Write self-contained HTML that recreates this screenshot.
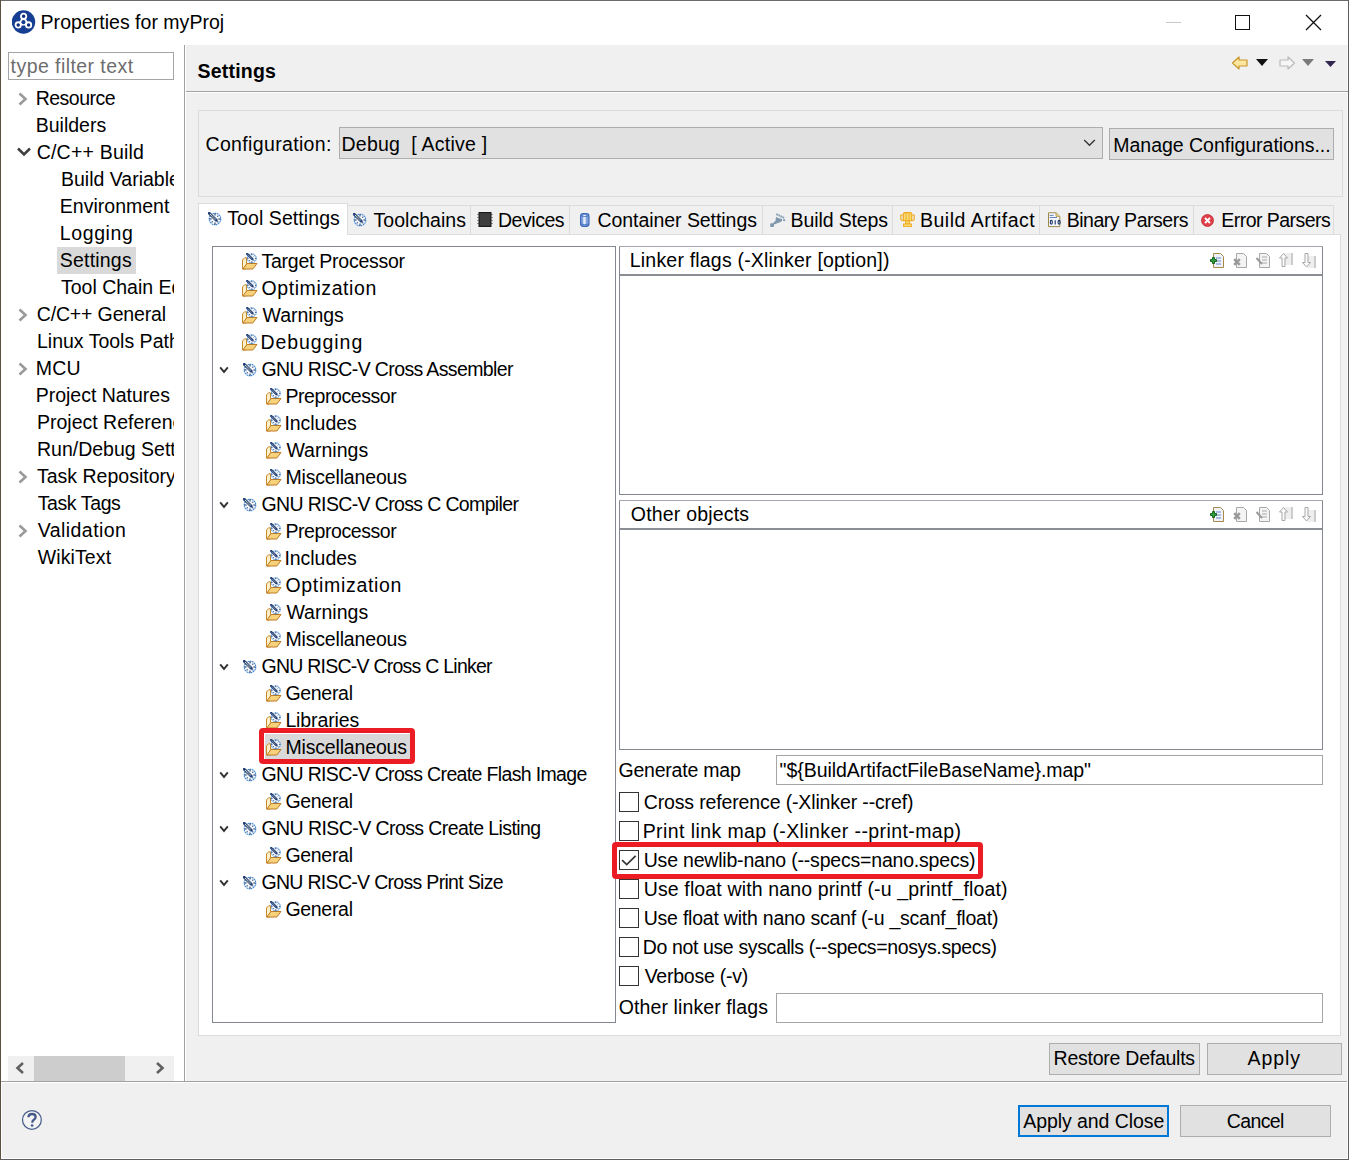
<!DOCTYPE html><html><head><meta charset="utf-8"><title>Properties for myProj</title><style>
*{box-sizing:border-box}
html,body{margin:0;padding:0}
body{width:1349px;height:1160px;position:relative;overflow:hidden;background:#f0f0f0;font-family:"Liberation Sans",sans-serif;font-size:19px;color:#000}
.a{position:absolute}
.t{position:absolute;white-space:pre;line-height:27px;height:27px}
</style></head><body>
<div class="a" style="left:1px;top:1px;width:1347px;height:44px;background:#fff"></div>
<svg class="a" style="left:12px;top:10px" width="24" height="24" viewBox="0 0 24 24"><circle cx="11.5" cy="12" r="11.7" fill="#163e93"/><polygon points="11.6,6.3 6.2,14.9 16.6,14.9" fill="#fff" stroke="#fff" stroke-width="1.4" stroke-linejoin="round"/><circle cx="11.45" cy="12.2" r="2.1" fill="#163e93"/><g fill="#0f2f7e" stroke="#fff" stroke-width="1.8"><circle cx="11.6" cy="6.3" r="2.65"/><circle cx="6.2" cy="14.9" r="2.65"/><circle cx="16.6" cy="14.9" r="2.65"/></g></svg><div id="t0" class="t" style="left:40.60px;top:9px;font-size:19.5px;letter-spacing:0.020px;">Properties for myProj</div>
<div class="a" style="left:1166px;top:22px;width:15px;height:1px;background:#c8c8c8"></div>
<div class="a" style="left:1235px;top:15px;width:15px;height:15px;border:1.5px solid #111"></div>
<svg class="a" style="left:1305px;top:14px" width="17" height="17" viewBox="0 0 17 17"><path d="M1 1 L16 16 M16 1 L1 16" stroke="#111" stroke-width="1.3"/></svg><div class="a" style="left:1px;top:45px;width:183px;height:1036px;background:#fff"></div>
<div class="a" style="left:184px;top:45px;width:1px;height:1037px;background:#a0a0a0"></div>
<div class="a" style="left:1px;top:1081px;width:1347px;height:1px;background:#a0a0a0"></div>
<div class="a" style="left:185px;top:45px;width:1px;height:1036px;background:#fff"></div>
<div class="a" style="left:1px;top:1082px;width:1347px;height:1px;background:#fff"></div>
<div class="a" style="left:1px;top:1082px;width:1px;height:77px;background:#fff"></div>
<div class="a" style="left:1px;top:1158px;width:1347px;height:1px;background:#fff"></div>
<div class="a" style="left:1347px;top:45px;width:1px;height:1114px;background:#fafafa"></div>
<div class="a" style="left:0px;top:0px;width:1349px;height:1px;background:#6a6a6a"></div>
<div class="a" style="left:0px;top:0px;width:1px;height:1160px;background:#5a5040"></div>
<div class="a" style="left:1348px;top:0px;width:1px;height:1160px;background:#5c5e62"></div>
<div class="a" style="left:0px;top:1159px;width:1349px;height:1px;background:#5c5e62"></div>
<div class="a" style="left:8px;top:52px;width:166px;height:28px;border:1px solid #a5a5a5;background:#fff"></div>
<div id="t1" class="t" style="left:10.60px;top:53px;color:#6d6d6d;font-size:19.5px;letter-spacing:0.433px;">type filter text</div>
<div class="a" style="left:0;top:0;width:174px;height:1056px;overflow:hidden">
<svg class="a" style="left:16px;top:91px" width="14" height="16" viewBox="0 0 14 16"><path d="M3.5 2.5 L9.5 8 L3.5 13.5" fill="none" stroke="#9a9a9a" stroke-width="2.6"/></svg><div id="t2" class="t" style="left:35.70px;top:85px;font-size:19.5px;letter-spacing:-0.514px;">Resource</div>
<div id="t3" class="t" style="left:35.70px;top:112px;font-size:19.5px;letter-spacing:0.014px;">Builders</div>
<svg class="a" style="left:16px;top:145px" width="16" height="14" viewBox="0 0 16 14"><path d="M2 3.5 L8 9.5 L14 3.5" fill="none" stroke="#404040" stroke-width="2.6"/></svg><div id="t4" class="t" style="left:36.70px;top:139px;font-size:19.5px;letter-spacing:0.210px;">C/C++ Build</div>
<div id="t5" class="t" style="left:61.00px;top:166px;font-size:19.5px;">Build Variables</div>
<div id="t6" class="t" style="left:59.80px;top:193px;font-size:19.5px;letter-spacing:0.010px;">Environment</div>
<div id="t7" class="t" style="left:59.80px;top:220px;font-size:19.5px;letter-spacing:0.600px;">Logging</div>
<div class="a" style="left:57px;top:247px;width:79px;height:27px;background:#d9d9d9"></div>
<div id="t8" class="t" style="left:59.80px;top:247px;font-size:19.5px;letter-spacing:0.200px;">Settings</div>
<div id="t9" class="t" style="left:61.00px;top:274px;font-size:19.5px;">Tool Chain Editor</div>
<svg class="a" style="left:16px;top:307px" width="14" height="16" viewBox="0 0 14 16"><path d="M3.5 2.5 L9.5 8 L3.5 13.5" fill="none" stroke="#9a9a9a" stroke-width="2.6"/></svg><div id="t10" class="t" style="left:36.70px;top:301px;font-size:19.5px;letter-spacing:-0.142px;">C/C++ General</div>
<div id="t11" class="t" style="left:37.00px;top:328px;font-size:19.5px;">Linux Tools Path</div>
<svg class="a" style="left:16px;top:361px" width="14" height="16" viewBox="0 0 14 16"><path d="M3.5 2.5 L9.5 8 L3.5 13.5" fill="none" stroke="#9a9a9a" stroke-width="2.6"/></svg><div id="t12" class="t" style="left:35.70px;top:355px;font-size:19.5px;letter-spacing:0.275px;">MCU</div>
<div id="t13" class="t" style="left:35.70px;top:382px;font-size:19.5px;letter-spacing:-0.014px;">Project Natures</div>
<div id="t14" class="t" style="left:37.00px;top:409px;font-size:19.5px;">Project References</div>
<div id="t15" class="t" style="left:37.00px;top:436px;font-size:19.5px;">Run/Debug Settings</div>
<svg class="a" style="left:16px;top:469px" width="14" height="16" viewBox="0 0 14 16"><path d="M3.5 2.5 L9.5 8 L3.5 13.5" fill="none" stroke="#9a9a9a" stroke-width="2.6"/></svg><div id="t16" class="t" style="left:37.00px;top:463px;font-size:19.5px;">Task Repository</div>
<div id="t17" class="t" style="left:37.70px;top:490px;font-size:19.5px;letter-spacing:-0.400px;">Task Tags</div>
<svg class="a" style="left:16px;top:523px" width="14" height="16" viewBox="0 0 14 16"><path d="M3.5 2.5 L9.5 8 L3.5 13.5" fill="none" stroke="#9a9a9a" stroke-width="2.6"/></svg><div id="t18" class="t" style="left:37.70px;top:517px;font-size:19.5px;letter-spacing:0.450px;">Validation</div>
<div id="t19" class="t" style="left:37.70px;top:544px;font-size:19.5px;letter-spacing:0.114px;">WikiText</div>
</div>
<div class="a" style="left:8px;top:1056px;width:166px;height:25px;background:#f0f0f0"></div>
<div class="a" style="left:34px;top:1056px;width:91px;height:25px;background:#cdcdcd"></div>
<svg class="a" style="left:14px;top:1061px" width="12" height="14" viewBox="0 0 12 14"><path d="M9 2 L3.5 7 L9 12" fill="none" stroke="#606060" stroke-width="2.6"/></svg><svg class="a" style="left:154px;top:1061px" width="12" height="14" viewBox="0 0 12 14"><path d="M3 2 L8.5 7 L3 12" fill="none" stroke="#606060" stroke-width="2.6"/></svg><div id="t20" class="t" style="left:197.50px;top:58px;font-weight:bold;font-size:19.5px;letter-spacing:0.214px;">Settings</div>
<div class="a" style="left:186px;top:91px;width:1162px;height:1px;background:#a0a0a0"></div>
<div class="a" style="left:185px;top:92px;width:1163px;height:1px;background:#fff"></div>
<svg class="a" style="left:1231px;top:55px" width="18" height="16" viewBox="0 0 18 16"><path d="M1.5 8 L8 2 L8 5 L16 5 L16 11 L8 11 L8 14 Z" fill="#fde6a0" stroke="#c9952a" stroke-width="1.2" stroke-linejoin="round"/></svg><svg class="a" style="left:1256px;top:59px" width="12" height="8" viewBox="0 0 12 8"><path d="M0 0 L12 0 L6 7 Z" fill="#111"/></svg><svg class="a" style="left:1278px;top:55px" width="18" height="16" viewBox="0 0 18 16"><path d="M16.5 8 L10 2 L10 5 L2 5 L2 11 L10 11 L10 14 Z" fill="#f6f6f6" stroke="#b9b9b9" stroke-width="1.2" stroke-linejoin="round"/></svg><svg class="a" style="left:1302px;top:59px" width="12" height="8" viewBox="0 0 12 8"><path d="M0 0 L12 0 L6 7 Z" fill="#7a7a7a"/></svg><svg class="a" style="left:1325px;top:61px" width="11" height="7" viewBox="0 0 11 7"><path d="M0 0 L11 0 L5.5 6 Z" fill="#35264f"/></svg><div class="a" style="left:198px;top:110px;width:1145px;height:87px;border:1px solid #dcdcdc"></div>
<div id="t21" class="t" style="left:205.50px;top:131px;font-size:19.5px;letter-spacing:0.346px;">Configuration:</div>
<div class="a" style="left:339px;top:127px;width:764px;height:32px;border:1px solid #adadad;background:#e1e1e1"></div>
<div id="t22" class="t" style="left:341.50px;top:131px;font-size:19.5px;letter-spacing:0.225px;">Debug  [ Active ]</div>
<svg class="a" style="left:1083px;top:138px" width="13" height="9" viewBox="0 0 13 9"><path d="M1.2 2 L6.5 7.3 L11.8 2" fill="none" stroke="#333" stroke-width="1.3"/></svg><div class="a" style="left:1109px;top:128px;width:225px;height:32px;border:1px solid #adadad;background:#e1e1e1"></div>
<div id="t23" class="t" style="left:1113.30px;top:132px;font-size:19.5px;letter-spacing:-0.022px;">Manage Configurations...</div>
<div class="a" style="left:347px;top:205px;width:987px;height:30px;border-top:1px solid #dcdcdc;border-right:1px solid #dcdcdc;background:#f0f0f0"></div>
<div class="a" style="left:470px;top:206px;width:1px;height:29px;background:#dcdcdc"></div>
<div class="a" style="left:569px;top:206px;width:1px;height:29px;background:#dcdcdc"></div>
<div class="a" style="left:762px;top:206px;width:1px;height:29px;background:#dcdcdc"></div>
<div class="a" style="left:892px;top:206px;width:1px;height:29px;background:#dcdcdc"></div>
<div class="a" style="left:1039px;top:206px;width:1px;height:29px;background:#dcdcdc"></div>
<div class="a" style="left:1193px;top:206px;width:1px;height:29px;background:#dcdcdc"></div>
<div class="a" style="left:198px;top:234px;width:1143px;height:802px;border:1px solid #dcdcdc;background:#fff"></div>
<div class="a" style="left:198px;top:203px;width:150px;height:32px;border:1px solid #dcdcdc;border-bottom:none;background:#fff"></div>
<svg class="a" style="left:208px;top:212px" width="14" height="14" viewBox="0 0 14 14"><circle cx="7" cy="7" r="5.8" fill="#f4f8fd" stroke="#3a86d4" stroke-width="1.1" stroke-dasharray="1.6 0.6"/><g stroke="#25406e" stroke-width="1.1"><line x1="7" y1="1.3" x2="7" y2="3.6"/><line x1="7" y1="10.4" x2="7" y2="12.7"/><line x1="1.3" y1="7" x2="3.6" y2="7"/><line x1="10.4" y1="7" x2="12.7" y2="7"/><line x1="10.3" y1="3.7" x2="9.4" y2="4.6"/><line x1="3.7" y1="10.3" x2="4.6" y2="9.4"/><line x1="10.3" y1="10.3" x2="9.4" y2="9.4"/></g><line x1="1.2" y1="1.2" x2="8.3" y2="8.3" stroke="#213f7a" stroke-width="2.8" stroke-linecap="round"/><line x1="2.2" y1="2.2" x2="7.6" y2="7.6" stroke="#f3efb8" stroke-width="1.2" stroke-dasharray="1 0.6"/></svg><div id="t24" class="t" style="left:227.30px;top:205px;font-size:19.5px;letter-spacing:0.075px;">Tool Settings</div>
<svg class="a" style="left:353px;top:213px" width="14" height="14" viewBox="0 0 14 14"><circle cx="7" cy="7" r="5.8" fill="#f4f8fd" stroke="#3a86d4" stroke-width="1.1" stroke-dasharray="1.6 0.6"/><g stroke="#25406e" stroke-width="1.1"><line x1="7" y1="1.3" x2="7" y2="3.6"/><line x1="7" y1="10.4" x2="7" y2="12.7"/><line x1="1.3" y1="7" x2="3.6" y2="7"/><line x1="10.4" y1="7" x2="12.7" y2="7"/><line x1="10.3" y1="3.7" x2="9.4" y2="4.6"/><line x1="3.7" y1="10.3" x2="4.6" y2="9.4"/><line x1="10.3" y1="10.3" x2="9.4" y2="9.4"/></g><line x1="1.2" y1="1.2" x2="8.3" y2="8.3" stroke="#213f7a" stroke-width="2.8" stroke-linecap="round"/><line x1="2.2" y1="2.2" x2="7.6" y2="7.6" stroke="#f3efb8" stroke-width="1.2" stroke-dasharray="1 0.6"/></svg><div id="t25" class="t" style="left:373.60px;top:207px;font-size:19.5px;letter-spacing:0.022px;">Toolchains</div>
<svg class="a" style="left:477px;top:212px" width="16" height="15" viewBox="0 0 16 15"><g fill="#999"><rect x="0" y="2" width="2" height="1"/><rect x="0" y="5" width="2" height="1"/><rect x="0" y="8" width="2" height="1"/><rect x="0" y="11" width="2" height="1"/><rect x="14" y="2" width="2" height="1"/><rect x="14" y="5" width="2" height="1"/><rect x="14" y="8" width="2" height="1"/><rect x="14" y="11" width="2" height="1"/></g><rect x="2" y="0.5" width="12" height="14" fill="#333" stroke="#1a1a1a"/><rect x="3" y="1.5" width="10" height="12" fill="#3e3e3e"/></svg><div id="t26" class="t" style="left:498.00px;top:207px;font-size:19.5px;letter-spacing:-0.467px;">Devices</div>
<svg class="a" style="left:580px;top:213px" width="10" height="14" viewBox="0 0 10 14"><rect x="0.6" y="0.6" width="8.4" height="12.8" rx="2.6" fill="#7fa2dc" stroke="#3a67b8" stroke-width="1.1"/><rect x="3.2" y="2" width="2.6" height="10" fill="#e3ebf9"/><path d="M1 2.8 Q4.8 4.4 8.6 2.8 M1 11 Q4.8 12.4 8.6 11" fill="none" stroke="#3a67b8" stroke-width="0.8"/></svg><div id="t27" class="t" style="left:597.50px;top:207px;font-size:19.5px;letter-spacing:-0.059px;">Container Settings</div>
<svg class="a" style="left:770px;top:213px" width="16" height="14" viewBox="0 0 16 14"><g fill="#7f98ad"><rect x="0.2" y="10.2" width="3.8" height="3.8" rx="0.8"/><path d="M2.8 10.3 L5.5 7.8 L6 4 L9 5.2 L12 6 L12 8 L10 9.3 L4 11.5 Z"/><rect x="6.2" y="0.6" width="1.8" height="1.8"/><rect x="8.3" y="1.6" width="1.8" height="1.8"/><rect x="10.4" y="2.6" width="1.8" height="1.8"/><rect x="12.4" y="3.6" width="1.8" height="1.8"/><rect x="13.2" y="6.2" width="1.9" height="1.9"/></g></svg><div id="t28" class="t" style="left:790.60px;top:207px;font-size:19.5px;letter-spacing:-0.120px;">Build Steps</div>
<svg class="a" style="left:900px;top:212px" width="15" height="15" viewBox="0 0 15 15"><path d="M0.8 3 L3.5 3 L3.5 8.5 L1.8 8.5 L0.8 7 Z M14.2 3 L11.5 3 L11.5 8.5 L13.2 8.5 L14.2 7 Z" fill="#eef2f8" stroke="#f0aa20" stroke-width="1.2"/><path d="M4.2 0.6 L10.8 0.6 L11.7 2 L11.7 8.8 L3.3 8.8 L3.3 2 Z" fill="#f8dc78" stroke="#f0aa20" stroke-width="1.1"/><g stroke="#f0aa20" stroke-width="1"><line x1="6" y1="1" x2="6" y2="8.5"/><line x1="9" y1="1" x2="9" y2="8.5"/></g><rect x="5.6" y="9" width="3.8" height="3" fill="#f8dc78" stroke="#f0aa20" stroke-width="1"/><rect x="3.6" y="12" width="7.8" height="2.6" fill="#f8dc78" stroke="#f0aa20" stroke-width="1"/></svg><div id="t29" class="t" style="left:920.00px;top:207px;font-size:19.5px;letter-spacing:0.492px;">Build Artifact</div>
<svg class="a" style="left:1047px;top:212px" width="16" height="16" viewBox="0 0 16 16"><path d="M1.5 0.8 L9.2 0.8 L12.8 4.4 L12.8 14.6 L1.5 14.6 Z" fill="#f4f7fd" stroke="#a08a4a" stroke-width="1"/><path d="M9 0.8 L9 4.4 L12.8 4.4" fill="#e6cf88" stroke="#b09540" stroke-width="0.8"/><g stroke="#6a82b6" stroke-width="1"><line x1="2.6" y1="3.4" x2="6.6" y2="3.4"/><line x1="2.6" y1="5.5" x2="10" y2="5.5"/></g><g fill="none" stroke="#17306a" stroke-width="1.1"><ellipse cx="4.3" cy="10.3" rx="1.05" ry="1.9"/><line x1="8.2" y1="8.2" x2="8.2" y2="12.4"/><ellipse cx="12.1" cy="10.3" rx="1.05" ry="1.9"/></g></svg><div id="t30" class="t" style="left:1066.70px;top:207px;font-size:19.5px;letter-spacing:-0.469px;">Binary Parsers</div>
<svg class="a" style="left:1201px;top:214px" width="13" height="13" viewBox="0 0 13 13"><circle cx="6.5" cy="6.5" r="6" fill="#e0404a" stroke="#c02a33" stroke-width="0.8"/><path d="M4 4 L9 9 M9 4 L4 9" stroke="#fff" stroke-width="1.8"/></svg><div id="t31" class="t" style="left:1221.30px;top:207px;font-size:19.5px;letter-spacing:-0.550px;">Error Parsers</div>
<div class="a" style="left:212px;top:246px;width:404px;height:777px;border:1px solid #828790;background:#fff"></div>
<svg class="a" style="left:241px;top:253px" width="17" height="17" viewBox="0 0 17 17"><path d="M1.5 16 L1.5 7 L3.5 4.8 L5.5 4.8 L5.5 10.5 L5 16 Z" fill="#fdf0c8" stroke="#c88a2e" stroke-width="1"/><path d="M1.8 16 L6 10.5 L16 10.5 L11.8 16 Z" fill="#f6d27c" stroke="#c07a20" stroke-width="1" stroke-linejoin="round"/><circle cx="10.8" cy="5.3" r="4.5" fill="#f4f8fd" stroke="#3a86d4" stroke-width="1" stroke-dasharray="1.3 0.5"/><g stroke="#25406e" stroke-width="0.9"><line x1="10.8" y1="8.4" x2="10.8" y2="9.8"/><line x1="14" y1="5.3" x2="15.3" y2="5.3"/><line x1="6.3" y1="5.3" x2="7.6" y2="5.3"/><line x1="10.8" y1="0.8" x2="10.8" y2="2.2"/><line x1="13.5" y1="2.6" x2="12.7" y2="3.4"/><line x1="13.5" y1="8" x2="12.7" y2="7.2"/><line x1="8.1" y1="8" x2="8.9" y2="7.2"/></g><line x1="6.2" y1="1" x2="11.4" y2="6.2" stroke="#213f7a" stroke-width="2.4" stroke-linecap="round"/><line x1="7" y1="1.8" x2="10.8" y2="5.6" stroke="#f3efb8" stroke-width="0.8" stroke-dasharray="0.8 0.6"/></svg><div id="t32" class="t" style="left:261.50px;top:248px;font-size:19.5px;letter-spacing:-0.253px;">Target Processor</div>
<svg class="a" style="left:241px;top:280px" width="17" height="17" viewBox="0 0 17 17"><path d="M1.5 16 L1.5 7 L3.5 4.8 L5.5 4.8 L5.5 10.5 L5 16 Z" fill="#fdf0c8" stroke="#c88a2e" stroke-width="1"/><path d="M1.8 16 L6 10.5 L16 10.5 L11.8 16 Z" fill="#f6d27c" stroke="#c07a20" stroke-width="1" stroke-linejoin="round"/><circle cx="10.8" cy="5.3" r="4.5" fill="#f4f8fd" stroke="#3a86d4" stroke-width="1" stroke-dasharray="1.3 0.5"/><g stroke="#25406e" stroke-width="0.9"><line x1="10.8" y1="8.4" x2="10.8" y2="9.8"/><line x1="14" y1="5.3" x2="15.3" y2="5.3"/><line x1="6.3" y1="5.3" x2="7.6" y2="5.3"/><line x1="10.8" y1="0.8" x2="10.8" y2="2.2"/><line x1="13.5" y1="2.6" x2="12.7" y2="3.4"/><line x1="13.5" y1="8" x2="12.7" y2="7.2"/><line x1="8.1" y1="8" x2="8.9" y2="7.2"/></g><line x1="6.2" y1="1" x2="11.4" y2="6.2" stroke="#213f7a" stroke-width="2.4" stroke-linecap="round"/><line x1="7" y1="1.8" x2="10.8" y2="5.6" stroke="#f3efb8" stroke-width="0.8" stroke-dasharray="0.8 0.6"/></svg><div id="t33" class="t" style="left:261.50px;top:275px;font-size:19.5px;letter-spacing:0.582px;">Optimization</div>
<svg class="a" style="left:241px;top:307px" width="17" height="17" viewBox="0 0 17 17"><path d="M1.5 16 L1.5 7 L3.5 4.8 L5.5 4.8 L5.5 10.5 L5 16 Z" fill="#fdf0c8" stroke="#c88a2e" stroke-width="1"/><path d="M1.8 16 L6 10.5 L16 10.5 L11.8 16 Z" fill="#f6d27c" stroke="#c07a20" stroke-width="1" stroke-linejoin="round"/><circle cx="10.8" cy="5.3" r="4.5" fill="#f4f8fd" stroke="#3a86d4" stroke-width="1" stroke-dasharray="1.3 0.5"/><g stroke="#25406e" stroke-width="0.9"><line x1="10.8" y1="8.4" x2="10.8" y2="9.8"/><line x1="14" y1="5.3" x2="15.3" y2="5.3"/><line x1="6.3" y1="5.3" x2="7.6" y2="5.3"/><line x1="10.8" y1="0.8" x2="10.8" y2="2.2"/><line x1="13.5" y1="2.6" x2="12.7" y2="3.4"/><line x1="13.5" y1="8" x2="12.7" y2="7.2"/><line x1="8.1" y1="8" x2="8.9" y2="7.2"/></g><line x1="6.2" y1="1" x2="11.4" y2="6.2" stroke="#213f7a" stroke-width="2.4" stroke-linecap="round"/><line x1="7" y1="1.8" x2="10.8" y2="5.6" stroke="#f3efb8" stroke-width="0.8" stroke-dasharray="0.8 0.6"/></svg><div id="t34" class="t" style="left:262.50px;top:302px;font-size:19.5px;letter-spacing:-0.043px;">Warnings</div>
<svg class="a" style="left:241px;top:334px" width="17" height="17" viewBox="0 0 17 17"><path d="M1.5 16 L1.5 7 L3.5 4.8 L5.5 4.8 L5.5 10.5 L5 16 Z" fill="#fdf0c8" stroke="#c88a2e" stroke-width="1"/><path d="M1.8 16 L6 10.5 L16 10.5 L11.8 16 Z" fill="#f6d27c" stroke="#c07a20" stroke-width="1" stroke-linejoin="round"/><circle cx="10.8" cy="5.3" r="4.5" fill="#f4f8fd" stroke="#3a86d4" stroke-width="1" stroke-dasharray="1.3 0.5"/><g stroke="#25406e" stroke-width="0.9"><line x1="10.8" y1="8.4" x2="10.8" y2="9.8"/><line x1="14" y1="5.3" x2="15.3" y2="5.3"/><line x1="6.3" y1="5.3" x2="7.6" y2="5.3"/><line x1="10.8" y1="0.8" x2="10.8" y2="2.2"/><line x1="13.5" y1="2.6" x2="12.7" y2="3.4"/><line x1="13.5" y1="8" x2="12.7" y2="7.2"/><line x1="8.1" y1="8" x2="8.9" y2="7.2"/></g><line x1="6.2" y1="1" x2="11.4" y2="6.2" stroke="#213f7a" stroke-width="2.4" stroke-linecap="round"/><line x1="7" y1="1.8" x2="10.8" y2="5.6" stroke="#f3efb8" stroke-width="0.8" stroke-dasharray="0.8 0.6"/></svg><div id="t35" class="t" style="left:260.50px;top:329px;font-size:19.5px;letter-spacing:0.925px;">Debugging</div>
<svg class="a" style="left:219px;top:366px" width="11" height="8" viewBox="0 0 11 8"><path d="M1.2 1.3 L5 5.9 L8.8 1.3" fill="none" stroke="#333" stroke-width="1.9"/></svg><svg class="a" style="left:243px;top:363px" width="14" height="14" viewBox="0 0 14 14"><circle cx="7" cy="7" r="5.8" fill="#f4f8fd" stroke="#3a86d4" stroke-width="1.1" stroke-dasharray="1.6 0.6"/><g stroke="#25406e" stroke-width="1.1"><line x1="7" y1="1.3" x2="7" y2="3.6"/><line x1="7" y1="10.4" x2="7" y2="12.7"/><line x1="1.3" y1="7" x2="3.6" y2="7"/><line x1="10.4" y1="7" x2="12.7" y2="7"/><line x1="10.3" y1="3.7" x2="9.4" y2="4.6"/><line x1="3.7" y1="10.3" x2="4.6" y2="9.4"/><line x1="10.3" y1="10.3" x2="9.4" y2="9.4"/></g><line x1="1.2" y1="1.2" x2="8.3" y2="8.3" stroke="#213f7a" stroke-width="2.8" stroke-linecap="round"/><line x1="2.2" y1="2.2" x2="7.6" y2="7.6" stroke="#f3efb8" stroke-width="1.2" stroke-dasharray="1 0.6"/></svg><div id="t36" class="t" style="left:261.50px;top:356px;font-size:19.5px;letter-spacing:-0.628px;">GNU RISC-V Cross Assembler</div>
<svg class="a" style="left:265px;top:388px" width="17" height="17" viewBox="0 0 17 17"><path d="M1.5 16 L1.5 7 L3.5 4.8 L5.5 4.8 L5.5 10.5 L5 16 Z" fill="#fdf0c8" stroke="#c88a2e" stroke-width="1"/><path d="M1.8 16 L6 10.5 L16 10.5 L11.8 16 Z" fill="#f6d27c" stroke="#c07a20" stroke-width="1" stroke-linejoin="round"/><circle cx="10.8" cy="5.3" r="4.5" fill="#f4f8fd" stroke="#3a86d4" stroke-width="1" stroke-dasharray="1.3 0.5"/><g stroke="#25406e" stroke-width="0.9"><line x1="10.8" y1="8.4" x2="10.8" y2="9.8"/><line x1="14" y1="5.3" x2="15.3" y2="5.3"/><line x1="6.3" y1="5.3" x2="7.6" y2="5.3"/><line x1="10.8" y1="0.8" x2="10.8" y2="2.2"/><line x1="13.5" y1="2.6" x2="12.7" y2="3.4"/><line x1="13.5" y1="8" x2="12.7" y2="7.2"/><line x1="8.1" y1="8" x2="8.9" y2="7.2"/></g><line x1="6.2" y1="1" x2="11.4" y2="6.2" stroke="#213f7a" stroke-width="2.4" stroke-linecap="round"/><line x1="7" y1="1.8" x2="10.8" y2="5.6" stroke="#f3efb8" stroke-width="0.8" stroke-dasharray="0.8 0.6"/></svg><div id="t37" class="t" style="left:285.40px;top:383px;font-size:19.5px;letter-spacing:-0.418px;">Preprocessor</div>
<svg class="a" style="left:265px;top:415px" width="17" height="17" viewBox="0 0 17 17"><path d="M1.5 16 L1.5 7 L3.5 4.8 L5.5 4.8 L5.5 10.5 L5 16 Z" fill="#fdf0c8" stroke="#c88a2e" stroke-width="1"/><path d="M1.8 16 L6 10.5 L16 10.5 L11.8 16 Z" fill="#f6d27c" stroke="#c07a20" stroke-width="1" stroke-linejoin="round"/><circle cx="10.8" cy="5.3" r="4.5" fill="#f4f8fd" stroke="#3a86d4" stroke-width="1" stroke-dasharray="1.3 0.5"/><g stroke="#25406e" stroke-width="0.9"><line x1="10.8" y1="8.4" x2="10.8" y2="9.8"/><line x1="14" y1="5.3" x2="15.3" y2="5.3"/><line x1="6.3" y1="5.3" x2="7.6" y2="5.3"/><line x1="10.8" y1="0.8" x2="10.8" y2="2.2"/><line x1="13.5" y1="2.6" x2="12.7" y2="3.4"/><line x1="13.5" y1="8" x2="12.7" y2="7.2"/><line x1="8.1" y1="8" x2="8.9" y2="7.2"/></g><line x1="6.2" y1="1" x2="11.4" y2="6.2" stroke="#213f7a" stroke-width="2.4" stroke-linecap="round"/><line x1="7" y1="1.8" x2="10.8" y2="5.6" stroke="#f3efb8" stroke-width="0.8" stroke-dasharray="0.8 0.6"/></svg><div id="t38" class="t" style="left:284.40px;top:410px;font-size:19.5px;letter-spacing:-0.029px;">Includes</div>
<svg class="a" style="left:265px;top:442px" width="17" height="17" viewBox="0 0 17 17"><path d="M1.5 16 L1.5 7 L3.5 4.8 L5.5 4.8 L5.5 10.5 L5 16 Z" fill="#fdf0c8" stroke="#c88a2e" stroke-width="1"/><path d="M1.8 16 L6 10.5 L16 10.5 L11.8 16 Z" fill="#f6d27c" stroke="#c07a20" stroke-width="1" stroke-linejoin="round"/><circle cx="10.8" cy="5.3" r="4.5" fill="#f4f8fd" stroke="#3a86d4" stroke-width="1" stroke-dasharray="1.3 0.5"/><g stroke="#25406e" stroke-width="0.9"><line x1="10.8" y1="8.4" x2="10.8" y2="9.8"/><line x1="14" y1="5.3" x2="15.3" y2="5.3"/><line x1="6.3" y1="5.3" x2="7.6" y2="5.3"/><line x1="10.8" y1="0.8" x2="10.8" y2="2.2"/><line x1="13.5" y1="2.6" x2="12.7" y2="3.4"/><line x1="13.5" y1="8" x2="12.7" y2="7.2"/><line x1="8.1" y1="8" x2="8.9" y2="7.2"/></g><line x1="6.2" y1="1" x2="11.4" y2="6.2" stroke="#213f7a" stroke-width="2.4" stroke-linecap="round"/><line x1="7" y1="1.8" x2="10.8" y2="5.6" stroke="#f3efb8" stroke-width="0.8" stroke-dasharray="0.8 0.6"/></svg><div id="t39" class="t" style="left:286.40px;top:437px;font-size:19.5px;letter-spacing:0.014px;">Warnings</div>
<svg class="a" style="left:265px;top:469px" width="17" height="17" viewBox="0 0 17 17"><path d="M1.5 16 L1.5 7 L3.5 4.8 L5.5 4.8 L5.5 10.5 L5 16 Z" fill="#fdf0c8" stroke="#c88a2e" stroke-width="1"/><path d="M1.8 16 L6 10.5 L16 10.5 L11.8 16 Z" fill="#f6d27c" stroke="#c07a20" stroke-width="1" stroke-linejoin="round"/><circle cx="10.8" cy="5.3" r="4.5" fill="#f4f8fd" stroke="#3a86d4" stroke-width="1" stroke-dasharray="1.3 0.5"/><g stroke="#25406e" stroke-width="0.9"><line x1="10.8" y1="8.4" x2="10.8" y2="9.8"/><line x1="14" y1="5.3" x2="15.3" y2="5.3"/><line x1="6.3" y1="5.3" x2="7.6" y2="5.3"/><line x1="10.8" y1="0.8" x2="10.8" y2="2.2"/><line x1="13.5" y1="2.6" x2="12.7" y2="3.4"/><line x1="13.5" y1="8" x2="12.7" y2="7.2"/><line x1="8.1" y1="8" x2="8.9" y2="7.2"/></g><line x1="6.2" y1="1" x2="11.4" y2="6.2" stroke="#213f7a" stroke-width="2.4" stroke-linecap="round"/><line x1="7" y1="1.8" x2="10.8" y2="5.6" stroke="#f3efb8" stroke-width="0.8" stroke-dasharray="0.8 0.6"/></svg><div id="t40" class="t" style="left:285.40px;top:464px;font-size:19.5px;letter-spacing:-0.158px;">Miscellaneous</div>
<svg class="a" style="left:219px;top:501px" width="11" height="8" viewBox="0 0 11 8"><path d="M1.2 1.3 L5 5.9 L8.8 1.3" fill="none" stroke="#333" stroke-width="1.9"/></svg><svg class="a" style="left:243px;top:498px" width="14" height="14" viewBox="0 0 14 14"><circle cx="7" cy="7" r="5.8" fill="#f4f8fd" stroke="#3a86d4" stroke-width="1.1" stroke-dasharray="1.6 0.6"/><g stroke="#25406e" stroke-width="1.1"><line x1="7" y1="1.3" x2="7" y2="3.6"/><line x1="7" y1="10.4" x2="7" y2="12.7"/><line x1="1.3" y1="7" x2="3.6" y2="7"/><line x1="10.4" y1="7" x2="12.7" y2="7"/><line x1="10.3" y1="3.7" x2="9.4" y2="4.6"/><line x1="3.7" y1="10.3" x2="4.6" y2="9.4"/><line x1="10.3" y1="10.3" x2="9.4" y2="9.4"/></g><line x1="1.2" y1="1.2" x2="8.3" y2="8.3" stroke="#213f7a" stroke-width="2.8" stroke-linecap="round"/><line x1="2.2" y1="2.2" x2="7.6" y2="7.6" stroke="#f3efb8" stroke-width="1.2" stroke-dasharray="1 0.6"/></svg><div id="t41" class="t" style="left:261.50px;top:491px;font-size:19.5px;letter-spacing:-0.642px;">GNU RISC-V Cross C Compiler</div>
<svg class="a" style="left:265px;top:523px" width="17" height="17" viewBox="0 0 17 17"><path d="M1.5 16 L1.5 7 L3.5 4.8 L5.5 4.8 L5.5 10.5 L5 16 Z" fill="#fdf0c8" stroke="#c88a2e" stroke-width="1"/><path d="M1.8 16 L6 10.5 L16 10.5 L11.8 16 Z" fill="#f6d27c" stroke="#c07a20" stroke-width="1" stroke-linejoin="round"/><circle cx="10.8" cy="5.3" r="4.5" fill="#f4f8fd" stroke="#3a86d4" stroke-width="1" stroke-dasharray="1.3 0.5"/><g stroke="#25406e" stroke-width="0.9"><line x1="10.8" y1="8.4" x2="10.8" y2="9.8"/><line x1="14" y1="5.3" x2="15.3" y2="5.3"/><line x1="6.3" y1="5.3" x2="7.6" y2="5.3"/><line x1="10.8" y1="0.8" x2="10.8" y2="2.2"/><line x1="13.5" y1="2.6" x2="12.7" y2="3.4"/><line x1="13.5" y1="8" x2="12.7" y2="7.2"/><line x1="8.1" y1="8" x2="8.9" y2="7.2"/></g><line x1="6.2" y1="1" x2="11.4" y2="6.2" stroke="#213f7a" stroke-width="2.4" stroke-linecap="round"/><line x1="7" y1="1.8" x2="10.8" y2="5.6" stroke="#f3efb8" stroke-width="0.8" stroke-dasharray="0.8 0.6"/></svg><div id="t42" class="t" style="left:285.40px;top:518px;font-size:19.5px;letter-spacing:-0.418px;">Preprocessor</div>
<svg class="a" style="left:265px;top:550px" width="17" height="17" viewBox="0 0 17 17"><path d="M1.5 16 L1.5 7 L3.5 4.8 L5.5 4.8 L5.5 10.5 L5 16 Z" fill="#fdf0c8" stroke="#c88a2e" stroke-width="1"/><path d="M1.8 16 L6 10.5 L16 10.5 L11.8 16 Z" fill="#f6d27c" stroke="#c07a20" stroke-width="1" stroke-linejoin="round"/><circle cx="10.8" cy="5.3" r="4.5" fill="#f4f8fd" stroke="#3a86d4" stroke-width="1" stroke-dasharray="1.3 0.5"/><g stroke="#25406e" stroke-width="0.9"><line x1="10.8" y1="8.4" x2="10.8" y2="9.8"/><line x1="14" y1="5.3" x2="15.3" y2="5.3"/><line x1="6.3" y1="5.3" x2="7.6" y2="5.3"/><line x1="10.8" y1="0.8" x2="10.8" y2="2.2"/><line x1="13.5" y1="2.6" x2="12.7" y2="3.4"/><line x1="13.5" y1="8" x2="12.7" y2="7.2"/><line x1="8.1" y1="8" x2="8.9" y2="7.2"/></g><line x1="6.2" y1="1" x2="11.4" y2="6.2" stroke="#213f7a" stroke-width="2.4" stroke-linecap="round"/><line x1="7" y1="1.8" x2="10.8" y2="5.6" stroke="#f3efb8" stroke-width="0.8" stroke-dasharray="0.8 0.6"/></svg><div id="t43" class="t" style="left:284.40px;top:545px;font-size:19.5px;letter-spacing:-0.029px;">Includes</div>
<svg class="a" style="left:265px;top:577px" width="17" height="17" viewBox="0 0 17 17"><path d="M1.5 16 L1.5 7 L3.5 4.8 L5.5 4.8 L5.5 10.5 L5 16 Z" fill="#fdf0c8" stroke="#c88a2e" stroke-width="1"/><path d="M1.8 16 L6 10.5 L16 10.5 L11.8 16 Z" fill="#f6d27c" stroke="#c07a20" stroke-width="1" stroke-linejoin="round"/><circle cx="10.8" cy="5.3" r="4.5" fill="#f4f8fd" stroke="#3a86d4" stroke-width="1" stroke-dasharray="1.3 0.5"/><g stroke="#25406e" stroke-width="0.9"><line x1="10.8" y1="8.4" x2="10.8" y2="9.8"/><line x1="14" y1="5.3" x2="15.3" y2="5.3"/><line x1="6.3" y1="5.3" x2="7.6" y2="5.3"/><line x1="10.8" y1="0.8" x2="10.8" y2="2.2"/><line x1="13.5" y1="2.6" x2="12.7" y2="3.4"/><line x1="13.5" y1="8" x2="12.7" y2="7.2"/><line x1="8.1" y1="8" x2="8.9" y2="7.2"/></g><line x1="6.2" y1="1" x2="11.4" y2="6.2" stroke="#213f7a" stroke-width="2.4" stroke-linecap="round"/><line x1="7" y1="1.8" x2="10.8" y2="5.6" stroke="#f3efb8" stroke-width="0.8" stroke-dasharray="0.8 0.6"/></svg><div id="t44" class="t" style="left:285.40px;top:572px;font-size:19.5px;letter-spacing:0.700px;">Optimization</div>
<svg class="a" style="left:265px;top:604px" width="17" height="17" viewBox="0 0 17 17"><path d="M1.5 16 L1.5 7 L3.5 4.8 L5.5 4.8 L5.5 10.5 L5 16 Z" fill="#fdf0c8" stroke="#c88a2e" stroke-width="1"/><path d="M1.8 16 L6 10.5 L16 10.5 L11.8 16 Z" fill="#f6d27c" stroke="#c07a20" stroke-width="1" stroke-linejoin="round"/><circle cx="10.8" cy="5.3" r="4.5" fill="#f4f8fd" stroke="#3a86d4" stroke-width="1" stroke-dasharray="1.3 0.5"/><g stroke="#25406e" stroke-width="0.9"><line x1="10.8" y1="8.4" x2="10.8" y2="9.8"/><line x1="14" y1="5.3" x2="15.3" y2="5.3"/><line x1="6.3" y1="5.3" x2="7.6" y2="5.3"/><line x1="10.8" y1="0.8" x2="10.8" y2="2.2"/><line x1="13.5" y1="2.6" x2="12.7" y2="3.4"/><line x1="13.5" y1="8" x2="12.7" y2="7.2"/><line x1="8.1" y1="8" x2="8.9" y2="7.2"/></g><line x1="6.2" y1="1" x2="11.4" y2="6.2" stroke="#213f7a" stroke-width="2.4" stroke-linecap="round"/><line x1="7" y1="1.8" x2="10.8" y2="5.6" stroke="#f3efb8" stroke-width="0.8" stroke-dasharray="0.8 0.6"/></svg><div id="t45" class="t" style="left:286.40px;top:599px;font-size:19.5px;letter-spacing:0.014px;">Warnings</div>
<svg class="a" style="left:265px;top:631px" width="17" height="17" viewBox="0 0 17 17"><path d="M1.5 16 L1.5 7 L3.5 4.8 L5.5 4.8 L5.5 10.5 L5 16 Z" fill="#fdf0c8" stroke="#c88a2e" stroke-width="1"/><path d="M1.8 16 L6 10.5 L16 10.5 L11.8 16 Z" fill="#f6d27c" stroke="#c07a20" stroke-width="1" stroke-linejoin="round"/><circle cx="10.8" cy="5.3" r="4.5" fill="#f4f8fd" stroke="#3a86d4" stroke-width="1" stroke-dasharray="1.3 0.5"/><g stroke="#25406e" stroke-width="0.9"><line x1="10.8" y1="8.4" x2="10.8" y2="9.8"/><line x1="14" y1="5.3" x2="15.3" y2="5.3"/><line x1="6.3" y1="5.3" x2="7.6" y2="5.3"/><line x1="10.8" y1="0.8" x2="10.8" y2="2.2"/><line x1="13.5" y1="2.6" x2="12.7" y2="3.4"/><line x1="13.5" y1="8" x2="12.7" y2="7.2"/><line x1="8.1" y1="8" x2="8.9" y2="7.2"/></g><line x1="6.2" y1="1" x2="11.4" y2="6.2" stroke="#213f7a" stroke-width="2.4" stroke-linecap="round"/><line x1="7" y1="1.8" x2="10.8" y2="5.6" stroke="#f3efb8" stroke-width="0.8" stroke-dasharray="0.8 0.6"/></svg><div id="t46" class="t" style="left:285.40px;top:626px;font-size:19.5px;letter-spacing:-0.158px;">Miscellaneous</div>
<svg class="a" style="left:219px;top:663px" width="11" height="8" viewBox="0 0 11 8"><path d="M1.2 1.3 L5 5.9 L8.8 1.3" fill="none" stroke="#333" stroke-width="1.9"/></svg><svg class="a" style="left:243px;top:660px" width="14" height="14" viewBox="0 0 14 14"><circle cx="7" cy="7" r="5.8" fill="#f4f8fd" stroke="#3a86d4" stroke-width="1.1" stroke-dasharray="1.6 0.6"/><g stroke="#25406e" stroke-width="1.1"><line x1="7" y1="1.3" x2="7" y2="3.6"/><line x1="7" y1="10.4" x2="7" y2="12.7"/><line x1="1.3" y1="7" x2="3.6" y2="7"/><line x1="10.4" y1="7" x2="12.7" y2="7"/><line x1="10.3" y1="3.7" x2="9.4" y2="4.6"/><line x1="3.7" y1="10.3" x2="4.6" y2="9.4"/><line x1="10.3" y1="10.3" x2="9.4" y2="9.4"/></g><line x1="1.2" y1="1.2" x2="8.3" y2="8.3" stroke="#213f7a" stroke-width="2.8" stroke-linecap="round"/><line x1="2.2" y1="2.2" x2="7.6" y2="7.6" stroke="#f3efb8" stroke-width="1.2" stroke-dasharray="1 0.6"/></svg><div id="t47" class="t" style="left:261.50px;top:653px;font-size:19.5px;letter-spacing:-0.754px;">GNU RISC-V Cross C Linker</div>
<svg class="a" style="left:265px;top:685px" width="17" height="17" viewBox="0 0 17 17"><path d="M1.5 16 L1.5 7 L3.5 4.8 L5.5 4.8 L5.5 10.5 L5 16 Z" fill="#fdf0c8" stroke="#c88a2e" stroke-width="1"/><path d="M1.8 16 L6 10.5 L16 10.5 L11.8 16 Z" fill="#f6d27c" stroke="#c07a20" stroke-width="1" stroke-linejoin="round"/><circle cx="10.8" cy="5.3" r="4.5" fill="#f4f8fd" stroke="#3a86d4" stroke-width="1" stroke-dasharray="1.3 0.5"/><g stroke="#25406e" stroke-width="0.9"><line x1="10.8" y1="8.4" x2="10.8" y2="9.8"/><line x1="14" y1="5.3" x2="15.3" y2="5.3"/><line x1="6.3" y1="5.3" x2="7.6" y2="5.3"/><line x1="10.8" y1="0.8" x2="10.8" y2="2.2"/><line x1="13.5" y1="2.6" x2="12.7" y2="3.4"/><line x1="13.5" y1="8" x2="12.7" y2="7.2"/><line x1="8.1" y1="8" x2="8.9" y2="7.2"/></g><line x1="6.2" y1="1" x2="11.4" y2="6.2" stroke="#213f7a" stroke-width="2.4" stroke-linecap="round"/><line x1="7" y1="1.8" x2="10.8" y2="5.6" stroke="#f3efb8" stroke-width="0.8" stroke-dasharray="0.8 0.6"/></svg><div id="t48" class="t" style="left:285.40px;top:680px;font-size:19.5px;letter-spacing:-0.300px;">General</div>
<svg class="a" style="left:265px;top:712px" width="17" height="17" viewBox="0 0 17 17"><path d="M1.5 16 L1.5 7 L3.5 4.8 L5.5 4.8 L5.5 10.5 L5 16 Z" fill="#fdf0c8" stroke="#c88a2e" stroke-width="1"/><path d="M1.8 16 L6 10.5 L16 10.5 L11.8 16 Z" fill="#f6d27c" stroke="#c07a20" stroke-width="1" stroke-linejoin="round"/><circle cx="10.8" cy="5.3" r="4.5" fill="#f4f8fd" stroke="#3a86d4" stroke-width="1" stroke-dasharray="1.3 0.5"/><g stroke="#25406e" stroke-width="0.9"><line x1="10.8" y1="8.4" x2="10.8" y2="9.8"/><line x1="14" y1="5.3" x2="15.3" y2="5.3"/><line x1="6.3" y1="5.3" x2="7.6" y2="5.3"/><line x1="10.8" y1="0.8" x2="10.8" y2="2.2"/><line x1="13.5" y1="2.6" x2="12.7" y2="3.4"/><line x1="13.5" y1="8" x2="12.7" y2="7.2"/><line x1="8.1" y1="8" x2="8.9" y2="7.2"/></g><line x1="6.2" y1="1" x2="11.4" y2="6.2" stroke="#213f7a" stroke-width="2.4" stroke-linecap="round"/><line x1="7" y1="1.8" x2="10.8" y2="5.6" stroke="#f3efb8" stroke-width="0.8" stroke-dasharray="0.8 0.6"/></svg><div id="t49" class="t" style="left:285.40px;top:707px;font-size:19.5px;letter-spacing:-0.113px;">Libraries</div>
<div class="a" style="left:265px;top:734px;width:145px;height:25px;background:#d9d9d9"></div>
<svg class="a" style="left:265px;top:739px" width="17" height="17" viewBox="0 0 17 17"><path d="M1.5 16 L1.5 7 L3.5 4.8 L5.5 4.8 L5.5 10.5 L5 16 Z" fill="#fdf0c8" stroke="#c88a2e" stroke-width="1"/><path d="M1.8 16 L6 10.5 L16 10.5 L11.8 16 Z" fill="#f6d27c" stroke="#c07a20" stroke-width="1" stroke-linejoin="round"/><circle cx="10.8" cy="5.3" r="4.5" fill="#f4f8fd" stroke="#3a86d4" stroke-width="1" stroke-dasharray="1.3 0.5"/><g stroke="#25406e" stroke-width="0.9"><line x1="10.8" y1="8.4" x2="10.8" y2="9.8"/><line x1="14" y1="5.3" x2="15.3" y2="5.3"/><line x1="6.3" y1="5.3" x2="7.6" y2="5.3"/><line x1="10.8" y1="0.8" x2="10.8" y2="2.2"/><line x1="13.5" y1="2.6" x2="12.7" y2="3.4"/><line x1="13.5" y1="8" x2="12.7" y2="7.2"/><line x1="8.1" y1="8" x2="8.9" y2="7.2"/></g><line x1="6.2" y1="1" x2="11.4" y2="6.2" stroke="#213f7a" stroke-width="2.4" stroke-linecap="round"/><line x1="7" y1="1.8" x2="10.8" y2="5.6" stroke="#f3efb8" stroke-width="0.8" stroke-dasharray="0.8 0.6"/></svg><div id="t50" class="t" style="left:285.40px;top:734px;font-size:19.5px;letter-spacing:-0.158px;">Miscellaneous</div>
<svg class="a" style="left:219px;top:771px" width="11" height="8" viewBox="0 0 11 8"><path d="M1.2 1.3 L5 5.9 L8.8 1.3" fill="none" stroke="#333" stroke-width="1.9"/></svg><svg class="a" style="left:243px;top:768px" width="14" height="14" viewBox="0 0 14 14"><circle cx="7" cy="7" r="5.8" fill="#f4f8fd" stroke="#3a86d4" stroke-width="1.1" stroke-dasharray="1.6 0.6"/><g stroke="#25406e" stroke-width="1.1"><line x1="7" y1="1.3" x2="7" y2="3.6"/><line x1="7" y1="10.4" x2="7" y2="12.7"/><line x1="1.3" y1="7" x2="3.6" y2="7"/><line x1="10.4" y1="7" x2="12.7" y2="7"/><line x1="10.3" y1="3.7" x2="9.4" y2="4.6"/><line x1="3.7" y1="10.3" x2="4.6" y2="9.4"/><line x1="10.3" y1="10.3" x2="9.4" y2="9.4"/></g><line x1="1.2" y1="1.2" x2="8.3" y2="8.3" stroke="#213f7a" stroke-width="2.8" stroke-linecap="round"/><line x1="2.2" y1="2.2" x2="7.6" y2="7.6" stroke="#f3efb8" stroke-width="1.2" stroke-dasharray="1 0.6"/></svg><div id="t51" class="t" style="left:261.50px;top:761px;font-size:19.5px;letter-spacing:-0.647px;">GNU RISC-V Cross Create Flash Image</div>
<svg class="a" style="left:265px;top:793px" width="17" height="17" viewBox="0 0 17 17"><path d="M1.5 16 L1.5 7 L3.5 4.8 L5.5 4.8 L5.5 10.5 L5 16 Z" fill="#fdf0c8" stroke="#c88a2e" stroke-width="1"/><path d="M1.8 16 L6 10.5 L16 10.5 L11.8 16 Z" fill="#f6d27c" stroke="#c07a20" stroke-width="1" stroke-linejoin="round"/><circle cx="10.8" cy="5.3" r="4.5" fill="#f4f8fd" stroke="#3a86d4" stroke-width="1" stroke-dasharray="1.3 0.5"/><g stroke="#25406e" stroke-width="0.9"><line x1="10.8" y1="8.4" x2="10.8" y2="9.8"/><line x1="14" y1="5.3" x2="15.3" y2="5.3"/><line x1="6.3" y1="5.3" x2="7.6" y2="5.3"/><line x1="10.8" y1="0.8" x2="10.8" y2="2.2"/><line x1="13.5" y1="2.6" x2="12.7" y2="3.4"/><line x1="13.5" y1="8" x2="12.7" y2="7.2"/><line x1="8.1" y1="8" x2="8.9" y2="7.2"/></g><line x1="6.2" y1="1" x2="11.4" y2="6.2" stroke="#213f7a" stroke-width="2.4" stroke-linecap="round"/><line x1="7" y1="1.8" x2="10.8" y2="5.6" stroke="#f3efb8" stroke-width="0.8" stroke-dasharray="0.8 0.6"/></svg><div id="t52" class="t" style="left:285.40px;top:788px;font-size:19.5px;letter-spacing:-0.300px;">General</div>
<svg class="a" style="left:219px;top:825px" width="11" height="8" viewBox="0 0 11 8"><path d="M1.2 1.3 L5 5.9 L8.8 1.3" fill="none" stroke="#333" stroke-width="1.9"/></svg><svg class="a" style="left:243px;top:822px" width="14" height="14" viewBox="0 0 14 14"><circle cx="7" cy="7" r="5.8" fill="#f4f8fd" stroke="#3a86d4" stroke-width="1.1" stroke-dasharray="1.6 0.6"/><g stroke="#25406e" stroke-width="1.1"><line x1="7" y1="1.3" x2="7" y2="3.6"/><line x1="7" y1="10.4" x2="7" y2="12.7"/><line x1="1.3" y1="7" x2="3.6" y2="7"/><line x1="10.4" y1="7" x2="12.7" y2="7"/><line x1="10.3" y1="3.7" x2="9.4" y2="4.6"/><line x1="3.7" y1="10.3" x2="4.6" y2="9.4"/><line x1="10.3" y1="10.3" x2="9.4" y2="9.4"/></g><line x1="1.2" y1="1.2" x2="8.3" y2="8.3" stroke="#213f7a" stroke-width="2.8" stroke-linecap="round"/><line x1="2.2" y1="2.2" x2="7.6" y2="7.6" stroke="#f3efb8" stroke-width="1.2" stroke-dasharray="1 0.6"/></svg><div id="t53" class="t" style="left:261.50px;top:815px;font-size:19.5px;letter-spacing:-0.573px;">GNU RISC-V Cross Create Listing</div>
<svg class="a" style="left:265px;top:847px" width="17" height="17" viewBox="0 0 17 17"><path d="M1.5 16 L1.5 7 L3.5 4.8 L5.5 4.8 L5.5 10.5 L5 16 Z" fill="#fdf0c8" stroke="#c88a2e" stroke-width="1"/><path d="M1.8 16 L6 10.5 L16 10.5 L11.8 16 Z" fill="#f6d27c" stroke="#c07a20" stroke-width="1" stroke-linejoin="round"/><circle cx="10.8" cy="5.3" r="4.5" fill="#f4f8fd" stroke="#3a86d4" stroke-width="1" stroke-dasharray="1.3 0.5"/><g stroke="#25406e" stroke-width="0.9"><line x1="10.8" y1="8.4" x2="10.8" y2="9.8"/><line x1="14" y1="5.3" x2="15.3" y2="5.3"/><line x1="6.3" y1="5.3" x2="7.6" y2="5.3"/><line x1="10.8" y1="0.8" x2="10.8" y2="2.2"/><line x1="13.5" y1="2.6" x2="12.7" y2="3.4"/><line x1="13.5" y1="8" x2="12.7" y2="7.2"/><line x1="8.1" y1="8" x2="8.9" y2="7.2"/></g><line x1="6.2" y1="1" x2="11.4" y2="6.2" stroke="#213f7a" stroke-width="2.4" stroke-linecap="round"/><line x1="7" y1="1.8" x2="10.8" y2="5.6" stroke="#f3efb8" stroke-width="0.8" stroke-dasharray="0.8 0.6"/></svg><div id="t54" class="t" style="left:285.40px;top:842px;font-size:19.5px;letter-spacing:-0.300px;">General</div>
<svg class="a" style="left:219px;top:879px" width="11" height="8" viewBox="0 0 11 8"><path d="M1.2 1.3 L5 5.9 L8.8 1.3" fill="none" stroke="#333" stroke-width="1.9"/></svg><svg class="a" style="left:243px;top:876px" width="14" height="14" viewBox="0 0 14 14"><circle cx="7" cy="7" r="5.8" fill="#f4f8fd" stroke="#3a86d4" stroke-width="1.1" stroke-dasharray="1.6 0.6"/><g stroke="#25406e" stroke-width="1.1"><line x1="7" y1="1.3" x2="7" y2="3.6"/><line x1="7" y1="10.4" x2="7" y2="12.7"/><line x1="1.3" y1="7" x2="3.6" y2="7"/><line x1="10.4" y1="7" x2="12.7" y2="7"/><line x1="10.3" y1="3.7" x2="9.4" y2="4.6"/><line x1="3.7" y1="10.3" x2="4.6" y2="9.4"/><line x1="10.3" y1="10.3" x2="9.4" y2="9.4"/></g><line x1="1.2" y1="1.2" x2="8.3" y2="8.3" stroke="#213f7a" stroke-width="2.8" stroke-linecap="round"/><line x1="2.2" y1="2.2" x2="7.6" y2="7.6" stroke="#f3efb8" stroke-width="1.2" stroke-dasharray="1 0.6"/></svg><div id="t55" class="t" style="left:261.50px;top:869px;font-size:19.5px;letter-spacing:-0.692px;">GNU RISC-V Cross Print Size</div>
<svg class="a" style="left:265px;top:901px" width="17" height="17" viewBox="0 0 17 17"><path d="M1.5 16 L1.5 7 L3.5 4.8 L5.5 4.8 L5.5 10.5 L5 16 Z" fill="#fdf0c8" stroke="#c88a2e" stroke-width="1"/><path d="M1.8 16 L6 10.5 L16 10.5 L11.8 16 Z" fill="#f6d27c" stroke="#c07a20" stroke-width="1" stroke-linejoin="round"/><circle cx="10.8" cy="5.3" r="4.5" fill="#f4f8fd" stroke="#3a86d4" stroke-width="1" stroke-dasharray="1.3 0.5"/><g stroke="#25406e" stroke-width="0.9"><line x1="10.8" y1="8.4" x2="10.8" y2="9.8"/><line x1="14" y1="5.3" x2="15.3" y2="5.3"/><line x1="6.3" y1="5.3" x2="7.6" y2="5.3"/><line x1="10.8" y1="0.8" x2="10.8" y2="2.2"/><line x1="13.5" y1="2.6" x2="12.7" y2="3.4"/><line x1="13.5" y1="8" x2="12.7" y2="7.2"/><line x1="8.1" y1="8" x2="8.9" y2="7.2"/></g><line x1="6.2" y1="1" x2="11.4" y2="6.2" stroke="#213f7a" stroke-width="2.4" stroke-linecap="round"/><line x1="7" y1="1.8" x2="10.8" y2="5.6" stroke="#f3efb8" stroke-width="0.8" stroke-dasharray="0.8 0.6"/></svg><div id="t56" class="t" style="left:285.40px;top:896px;font-size:19.5px;letter-spacing:-0.300px;">General</div>
<div class="a" style="left:259px;top:728px;width:156px;height:36px;border:5.5px solid #ec1c24;border-radius:4px"></div>
<div class="a" style="left:619px;top:246px;width:704px;height:249px;border:1px solid #828790;background:#fff"></div>
<div class="a" style="left:619px;top:246px;width:704px;height:1px;background:#a4a7ad"></div>
<div class="a" style="left:620px;top:274px;width:702px;height:2px;background:#8a8d94"></div>
<div id="t57" class="t" style="left:629.80px;top:247px;font-size:19.5px;letter-spacing:0.194px;">Linker flags (-Xlinker [option])</div>
<svg class="a" style="left:1210px;top:253px" width="15" height="15" viewBox="0 0 15 15"><path d="M3.5 0.5 L10.5 0.5 L13.5 3.5 L13.5 14.5 L3.5 14.5 Z" fill="#eef2fa" stroke="#a88a48"/><g stroke="#6d8bc8"><line x1="6" y1="5" x2="11" y2="5"/><line x1="6" y1="8" x2="11" y2="8"/><line x1="6" y1="11" x2="11" y2="11"/></g><path d="M2.5 4.5 L4.5 4.5 L4.5 6.5 L6.5 6.5 L6.5 8.5 L4.5 8.5 L4.5 10.5 L2.5 10.5 L2.5 8.5 L0.5 8.5 L0.5 6.5 L2.5 6.5 Z" fill="#2fa13a" stroke="#0b5a17" stroke-width="0.9"/></svg><svg class="a" style="left:1233px;top:253px" width="15" height="15" viewBox="0 0 15 15"><path d="M3.5 0.5 L10.5 0.5 L13.5 3.5 L13.5 14.5 L3.5 14.5 Z" fill="#f4f4f4" stroke="#a8a8a8"/><path d="M1.2 6.2 L6.8 11.8 M6.8 6.2 L1.2 11.8" stroke="#9a9a9a" stroke-width="2.6"/></svg><svg class="a" style="left:1256px;top:253px" width="15" height="15" viewBox="0 0 15 15"><path d="M3.5 0.5 L10.5 0.5 L13.5 3.5 L13.5 14.5 L3.5 14.5 Z" fill="#f4f4f4" stroke="#a8a8a8"/><g stroke="#aaa"><line x1="6" y1="4" x2="11" y2="4"/><line x1="6" y1="7" x2="11" y2="7"/><line x1="6" y1="10" x2="11" y2="10"/></g><path d="M0.5 5 L6 11" stroke="#9a9a9a" stroke-width="2"/></svg><svg class="a" style="left:1279px;top:253px" width="15" height="15" viewBox="0 0 15 15"><rect x="5" y="0" width="7" height="12" fill="#eeeeee"/><path d="M4.5 0.5 L8.5 5 L6 5 L6 13.5 L3 13.5 L3 5 L0.5 5 Z" fill="#fafafa" stroke="#a8a8a8"/><line x1="13" y1="0" x2="13" y2="12" stroke="#aaa" stroke-width="1.2"/></svg><svg class="a" style="left:1302px;top:253px" width="15" height="15" viewBox="0 0 15 15"><rect x="5" y="3" width="7" height="12" fill="#eeeeee"/><path d="M4.5 14 L8.5 9.5 L6 9.5 L6 0.5 L3 0.5 L3 9.5 L0.5 9.5 Z" fill="#fafafa" stroke="#a8a8a8"/><line x1="13" y1="3" x2="13" y2="15" stroke="#aaa" stroke-width="1.2"/></svg><div class="a" style="left:619px;top:500px;width:704px;height:250px;border:1px solid #828790;background:#fff"></div>
<div class="a" style="left:619px;top:500px;width:704px;height:1px;background:#a4a7ad"></div>
<div class="a" style="left:620px;top:528px;width:702px;height:2px;background:#8a8d94"></div>
<div id="t58" class="t" style="left:630.80px;top:501px;font-size:19.5px;letter-spacing:0.192px;">Other objects</div>
<svg class="a" style="left:1210px;top:507px" width="15" height="15" viewBox="0 0 15 15"><path d="M3.5 0.5 L10.5 0.5 L13.5 3.5 L13.5 14.5 L3.5 14.5 Z" fill="#eef2fa" stroke="#a88a48"/><g stroke="#6d8bc8"><line x1="6" y1="5" x2="11" y2="5"/><line x1="6" y1="8" x2="11" y2="8"/><line x1="6" y1="11" x2="11" y2="11"/></g><path d="M2.5 4.5 L4.5 4.5 L4.5 6.5 L6.5 6.5 L6.5 8.5 L4.5 8.5 L4.5 10.5 L2.5 10.5 L2.5 8.5 L0.5 8.5 L0.5 6.5 L2.5 6.5 Z" fill="#2fa13a" stroke="#0b5a17" stroke-width="0.9"/></svg><svg class="a" style="left:1233px;top:507px" width="15" height="15" viewBox="0 0 15 15"><path d="M3.5 0.5 L10.5 0.5 L13.5 3.5 L13.5 14.5 L3.5 14.5 Z" fill="#f4f4f4" stroke="#a8a8a8"/><path d="M1.2 6.2 L6.8 11.8 M6.8 6.2 L1.2 11.8" stroke="#9a9a9a" stroke-width="2.6"/></svg><svg class="a" style="left:1256px;top:507px" width="15" height="15" viewBox="0 0 15 15"><path d="M3.5 0.5 L10.5 0.5 L13.5 3.5 L13.5 14.5 L3.5 14.5 Z" fill="#f4f4f4" stroke="#a8a8a8"/><g stroke="#aaa"><line x1="6" y1="4" x2="11" y2="4"/><line x1="6" y1="7" x2="11" y2="7"/><line x1="6" y1="10" x2="11" y2="10"/></g><path d="M0.5 5 L6 11" stroke="#9a9a9a" stroke-width="2"/></svg><svg class="a" style="left:1279px;top:507px" width="15" height="15" viewBox="0 0 15 15"><rect x="5" y="0" width="7" height="12" fill="#eeeeee"/><path d="M4.5 0.5 L8.5 5 L6 5 L6 13.5 L3 13.5 L3 5 L0.5 5 Z" fill="#fafafa" stroke="#a8a8a8"/><line x1="13" y1="0" x2="13" y2="12" stroke="#aaa" stroke-width="1.2"/></svg><svg class="a" style="left:1302px;top:507px" width="15" height="15" viewBox="0 0 15 15"><rect x="5" y="3" width="7" height="12" fill="#eeeeee"/><path d="M4.5 14 L8.5 9.5 L6 9.5 L6 0.5 L3 0.5 L3 9.5 L0.5 9.5 Z" fill="#fafafa" stroke="#a8a8a8"/><line x1="13" y1="3" x2="13" y2="15" stroke="#aaa" stroke-width="1.2"/></svg><div id="t59" class="t" style="left:618.50px;top:757px;font-size:19.5px;letter-spacing:-0.218px;">Generate map</div>
<div class="a" style="left:776px;top:755px;width:547px;height:30px;border:1px solid #a5a5a5;background:#fff"></div>
<div id="t60" class="t" style="left:779.60px;top:757px;font-size:19.5px;letter-spacing:-0.048px;">"${BuildArtifactFileBaseName}.map"</div>
<div class="a" style="left:619px;top:792px;width:20px;height:20px;border:1px solid #333;background:#fff"></div>
<div id="t61" class="t" style="left:643.70px;top:789px;font-size:19.5px;letter-spacing:-0.137px;">Cross reference (-Xlinker --cref)</div>
<div class="a" style="left:619px;top:821px;width:20px;height:20px;border:1px solid #333;background:#fff"></div>
<div id="t62" class="t" style="left:642.70px;top:818px;font-size:19.5px;letter-spacing:0.411px;">Print link map (-Xlinker --print-map)</div>
<div class="a" style="left:619px;top:850px;width:20px;height:20px;border:1px solid #333;background:#fff"></div>
<svg class="a" style="left:620px;top:851px" width="18" height="18" viewBox="0 0 18 18"><path d="M2.1 9.2 L6.7 13.5 L15.6 4.9" fill="none" stroke="#333" stroke-width="1.7"/></svg><div id="t63" class="t" style="left:643.70px;top:847px;font-size:19.5px;letter-spacing:-0.197px;">Use newlib-nano (--specs=nano.specs)</div>
<div class="a" style="left:619px;top:879px;width:20px;height:20px;border:1px solid #333;background:#fff"></div>
<div id="t64" class="t" style="left:643.70px;top:876px;font-size:19.5px;letter-spacing:0.139px;">Use float with nano printf (-u _printf_float)</div>
<div class="a" style="left:619px;top:908px;width:20px;height:20px;border:1px solid #333;background:#fff"></div>
<div id="t65" class="t" style="left:643.70px;top:905px;font-size:19.5px;letter-spacing:-0.226px;">Use float with nano scanf (-u _scanf_float)</div>
<div class="a" style="left:619px;top:937px;width:20px;height:20px;border:1px solid #333;background:#fff"></div>
<div id="t66" class="t" style="left:642.70px;top:934px;font-size:19.5px;letter-spacing:-0.367px;">Do not use syscalls (--specs=nosys.specs)</div>
<div class="a" style="left:619px;top:966px;width:20px;height:20px;border:1px solid #333;background:#fff"></div>
<div id="t67" class="t" style="left:644.70px;top:963px;font-size:19.5px;letter-spacing:-0.245px;">Verbose (-v)</div>
<div class="a" style="left:612px;top:842px;width:371px;height:37px;border:5.8px solid #ec1c24;border-radius:4px"></div>
<div id="t68" class="t" style="left:618.80px;top:994px;font-size:19.5px;letter-spacing:0.100px;">Other linker flags</div>
<div class="a" style="left:776px;top:993px;width:547px;height:30px;border:1px solid #a5a5a5;background:#fff"></div>
<div class="a" style="left:1049px;top:1043px;width:151px;height:32px;border:1px solid #adadad;background:#e1e1e1"></div>
<div id="t69" class="t" style="left:1053.60px;top:1045px;font-size:19.5px;letter-spacing:-0.247px;">Restore Defaults</div>
<div class="a" style="left:1207px;top:1043px;width:135px;height:32px;border:1px solid #adadad;background:#e1e1e1"></div>
<div id="t70" class="t" style="left:1247.60px;top:1045px;font-size:19.5px;letter-spacing:0.900px;">Apply</div>
<div class="a" style="left:1018px;top:1105px;width:151px;height:32px;border:2px solid #0078d7;background:#e1e1e1"></div>
<div id="t71" class="t" style="left:1023.20px;top:1108px;font-size:19.5px;letter-spacing:-0.064px;">Apply and Close</div>
<div class="a" style="left:1180px;top:1105px;width:151px;height:32px;border:1px solid #adadad;background:#e1e1e1"></div>
<div id="t72" class="t" style="left:1226.80px;top:1108px;font-size:19.5px;letter-spacing:-0.640px;">Cancel</div>
<svg class="a" style="left:21px;top:1109px" width="22" height="22" viewBox="0 0 22 22"><circle cx="10.9" cy="10.9" r="9.4" fill="#f4f4f4" stroke="#4a5f8c" stroke-width="1.25"/><path d="M7.4 8.3 Q7.6 5 11.1 5 Q14.6 5 14.6 8 Q14.6 9.7 12.6 10.9 Q11.3 11.8 11.3 13.8" fill="none" stroke="#445a88" stroke-width="2.3"/><circle cx="11.1" cy="16.5" r="1.35" fill="#445a88"/></svg></body></html>
